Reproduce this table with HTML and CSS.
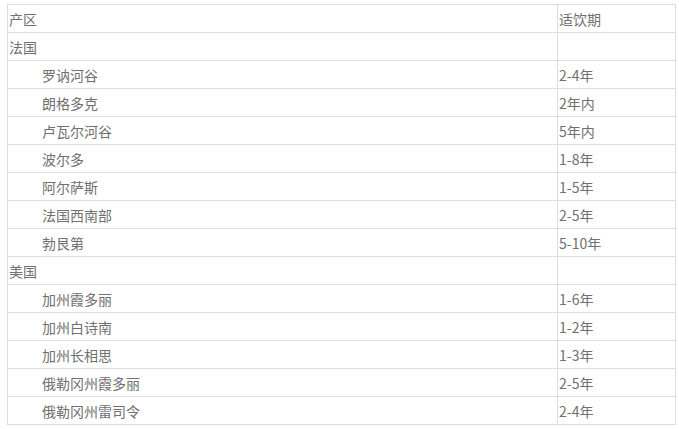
FILE: index.html
```html
<!DOCTYPE html>
<html lang="zh">
<head>
<meta charset="utf-8">
<link rel="stylesheet" href="styles.css">
</head>
<body>
<table class="wine">
  <colgroup><col class="c1"><col class="c2"></colgroup>
  <tr><td>产区</td><td>适饮期</td></tr>
  <tr><td>法国</td><td></td></tr>
  <tr><td class="sub">罗讷河谷</td><td>2-4年</td></tr>
  <tr><td class="sub">朗格多克</td><td>2年内</td></tr>
  <tr><td class="sub">卢瓦尔河谷</td><td>5年内</td></tr>
  <tr><td class="sub">波尔多</td><td>1-8年</td></tr>
  <tr><td class="sub">阿尔萨斯</td><td>1-5年</td></tr>
  <tr><td class="sub">法国西南部</td><td>2-5年</td></tr>
  <tr><td class="sub">勃艮第</td><td>5-10年</td></tr>
  <tr><td>美国</td><td></td></tr>
  <tr><td class="sub">加州霞多丽</td><td>1-6年</td></tr>
  <tr><td class="sub">加州白诗南</td><td>1-2年</td></tr>
  <tr><td class="sub">加州长相思</td><td>1-3年</td></tr>
  <tr><td class="sub">俄勒冈州霞多丽</td><td>2-5年</td></tr>
  <tr><td class="sub">俄勒冈州雷司令</td><td>2-4年</td></tr>
</table>
</body>
</html>
```
FILE: styles.css
```css
html, body { margin: 0; background: #fff; }
body { padding: 4px 0 0 7px; }
.wine {
  border-collapse: collapse;
  width: 668px;
  table-layout: fixed;
  font-family: "Noto Sans CJK SC", "Liberation Sans", sans-serif;
  font-size: 14px;
  color: #707070;
}
.c1 { width: 550px; }
.c2 { width: 118px; }
.wine td {
  border: 1px solid #ddd;
  height: 27px;
  padding: 1px 0 0 1px;
  box-sizing: border-box;
  vertical-align: middle;
  line-height: 16px;
  white-space: nowrap;
}
.wine tr { height: 28px; }
.wine td.sub { padding-left: 34px; }
```
